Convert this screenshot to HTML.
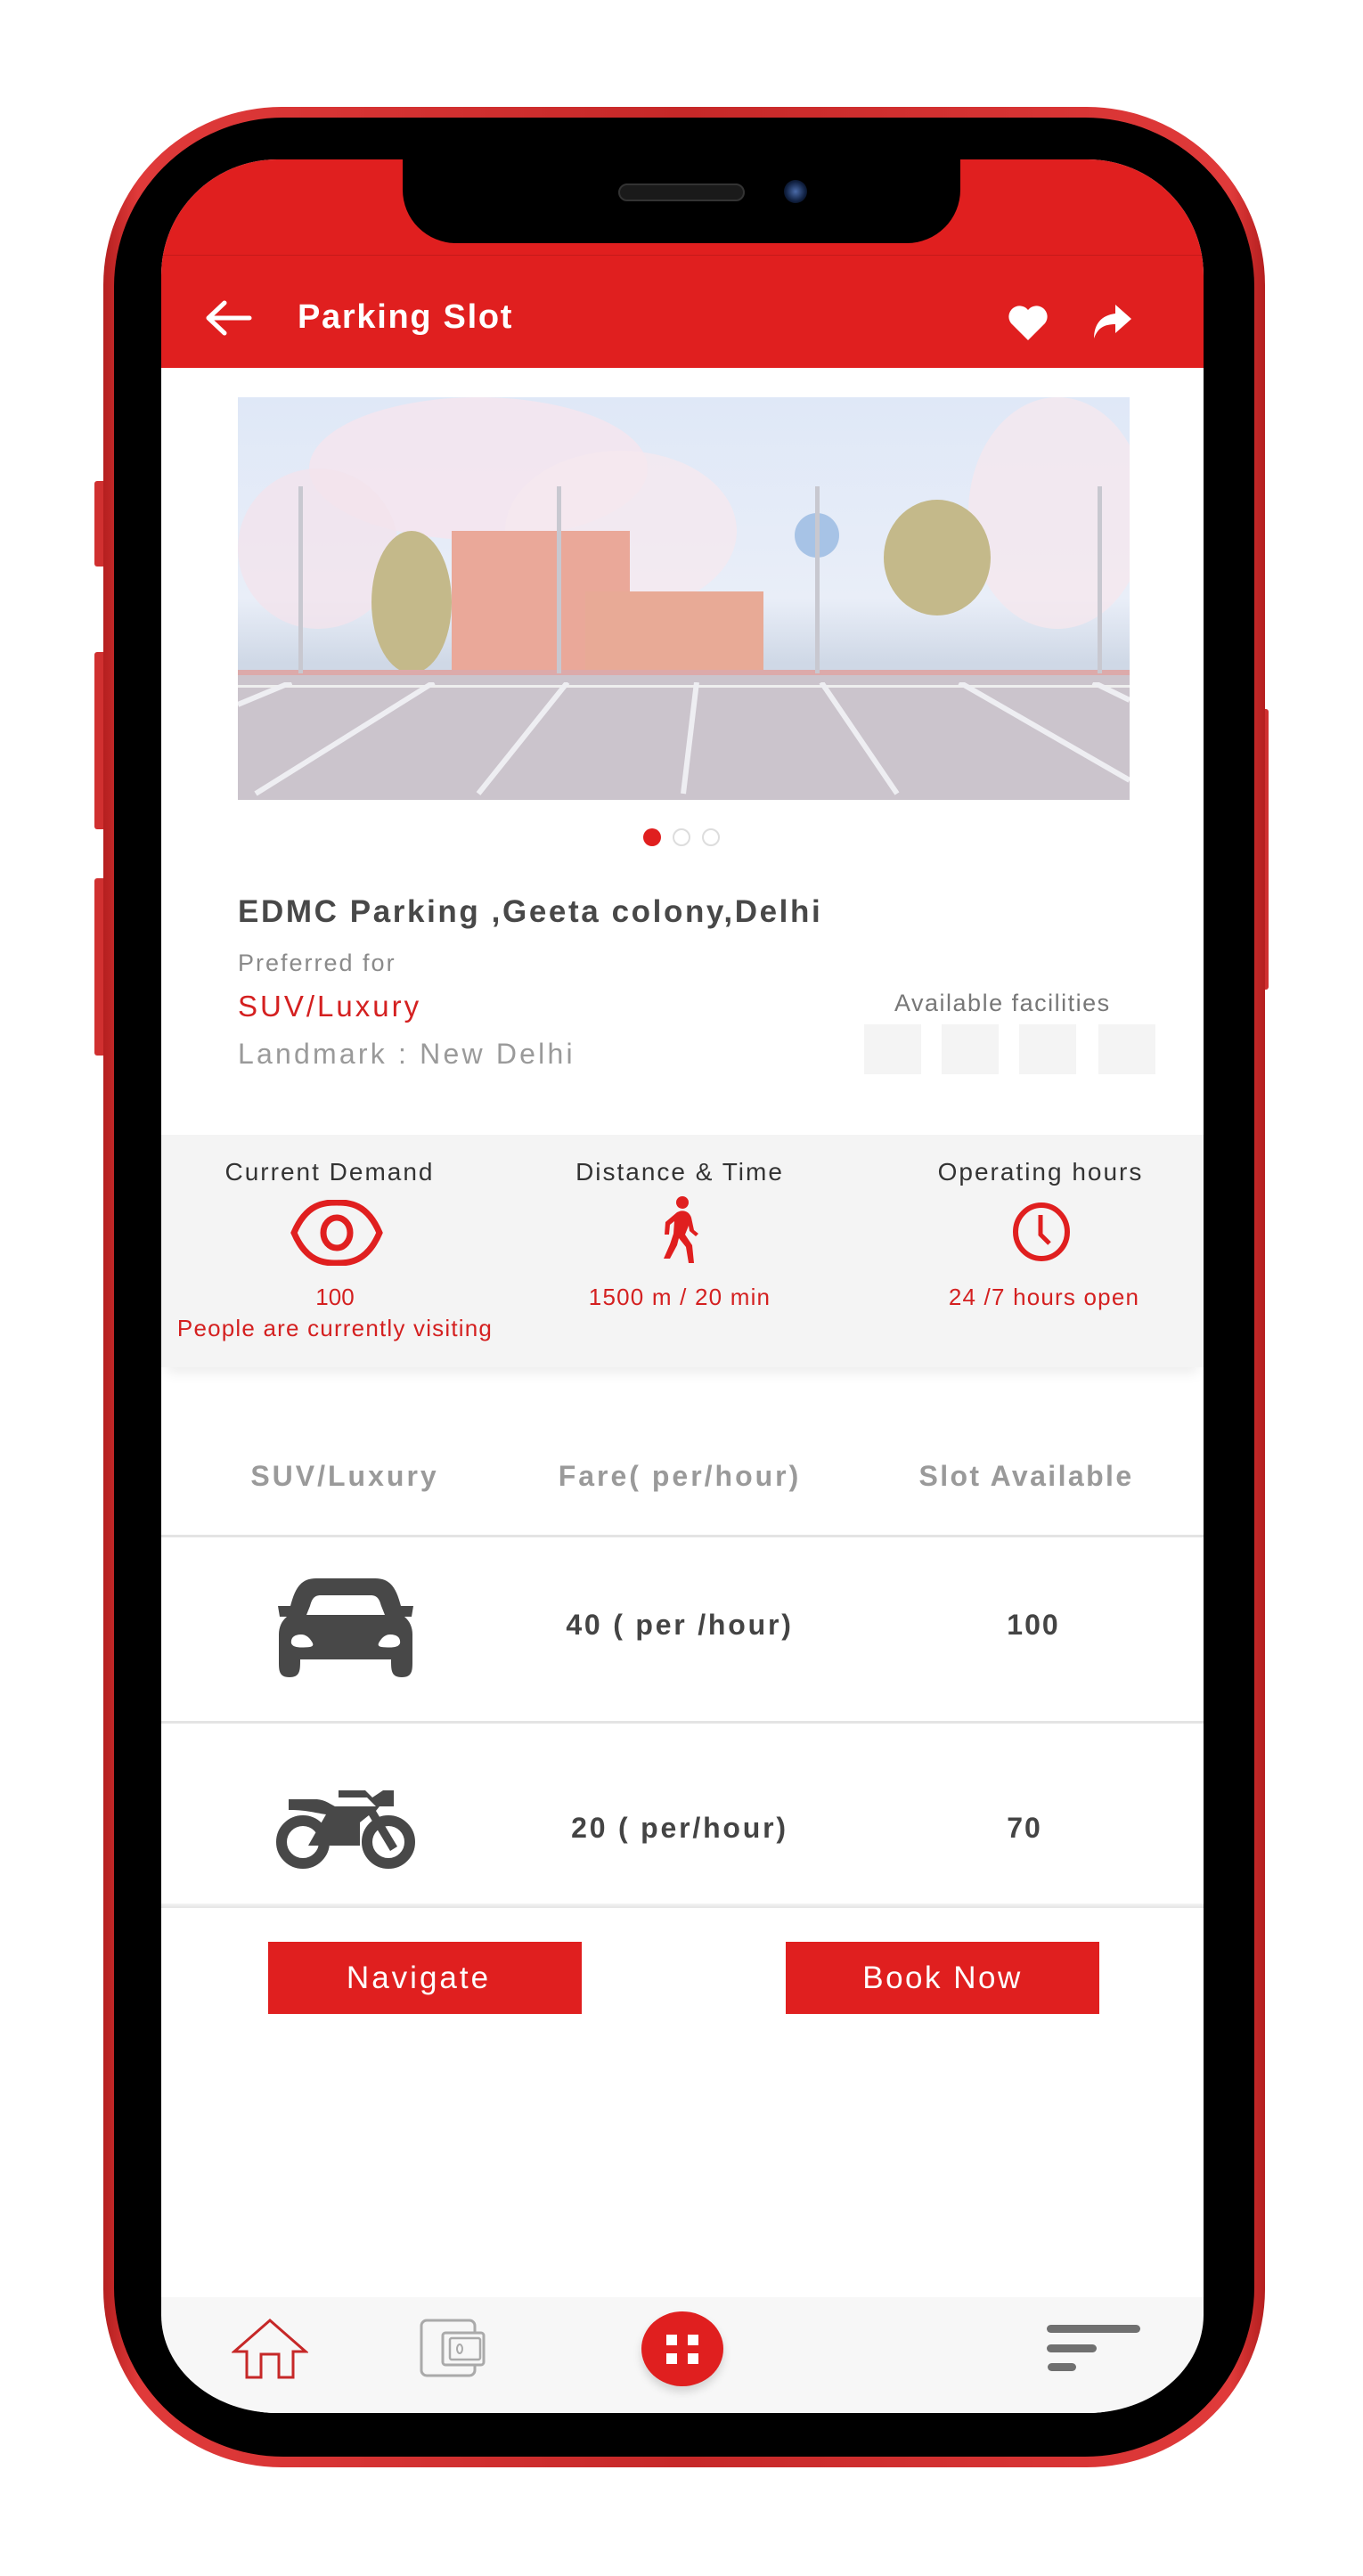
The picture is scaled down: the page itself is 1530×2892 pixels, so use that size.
<!DOCTYPE html>
<html><head><meta charset="utf-8"><style>
*{margin:0;padding:0;box-sizing:border-box}
body{width:1530px;height:2892px;background:#fff;position:relative;overflow:hidden;font-family:"Liberation Sans",sans-serif}
.a{position:absolute}
.t{position:absolute;white-space:nowrap}
</style></head><body>
<div class="a" style="left:106px;top:540px;width:14px;height:96px;background:#d03030;border-radius:3px"></div>
<div class="a" style="left:106px;top:732px;width:14px;height:199px;background:#d03030;border-radius:3px"></div>
<div class="a" style="left:106px;top:986px;width:14px;height:199px;background:#d03030;border-radius:3px"></div>
<div class="a" style="left:1412px;top:796px;width:12px;height:315px;background:#d03030;border-radius:3px"></div>
<div class="a" style="left:116px;top:120px;width:1304px;height:2650px;border-radius:200px;background:linear-gradient(90deg,#b51f1f,#e03a3a 3%,#c62828 50%,#e03a3a 97%,#b51f1f)"></div>
<div class="a" style="left:128px;top:132px;width:1280px;height:2626px;border-radius:190px;background:#000"></div>
<div class="a" style="left:181px;top:179px;width:1170px;height:2530px;border-radius:130px;background:#fff;overflow:hidden">
  <div class="a" style="left:0;top:0;width:1170px;height:234px;background:#e01f1f"></div>
  <div class="a" style="left:0;top:107px;width:1170px;height:1px;background:#c41a1a"></div>
  <div class="a" style="left:0;top:234px;width:1170px;height:2296px;background:#fff;border-radius:18px 18px 0 0"></div>
</div>
<div class="a" style="left:452px;top:170px;width:626px;height:103px;background:#000;border-radius:0 0 60px 60px"></div>
<div class="a" style="left:694px;top:206px;width:142px;height:20px;border-radius:10px;background:#1a1a1a;border:2px solid #333"></div>
<div class="a" style="left:880px;top:202px;width:26px;height:26px;border-radius:50%;background:radial-gradient(#4a6aa8,#102040 60%,#000)"></div>
<svg class="a" style="left:228px;top:337px" width="56" height="40" viewBox="0 0 56 40"><path d="M52 20H6M24 3L6 20l18 17" stroke="#fff" stroke-width="5" fill="none" stroke-linecap="round" stroke-linejoin="round"/></svg>
<div class="t" style="left:334px;top:335px;font-size:38px;color:#fff;font-weight:bold;letter-spacing:1.7px">Parking Slot</div>
<svg class="a" style="left:1130px;top:340px" width="48" height="44" viewBox="0 0 24 22"><path d="M12 21L2.5 11.5A5.5 5.5 0 0 1 12 4a5.5 5.5 0 0 1 9.5 7.5z" fill="#fff"/></svg>
<svg class="a" style="left:1222px;top:338px" width="50" height="48" viewBox="0 0 25 24"><path d="M15 2l9 8-9 8v-5c-6 0-10 2-12 8 0-8 4-13 12-14z" fill="#fff"/></svg>
<div class="a" style="left:267px;top:446px;width:1001px;height:452px;overflow:hidden;background:linear-gradient(#dfe8f7,#e9eef8 50%,#cfd8e6 66%)">
  <div class="a" style="left:80px;top:0;width:380px;height:160px;border-radius:50%;background:#f4e6ee;opacity:.9"></div>
  <div class="a" style="left:0px;top:80px;width:180px;height:180px;border-radius:50%;background:#f3e4ec;opacity:.8"></div>
  <div class="a" style="left:300px;top:60px;width:260px;height:180px;border-radius:50%;background:#f5e8ef;opacity:.8"></div>
  <div class="a" style="left:820px;top:0px;width:200px;height:260px;border-radius:50%;background:#f5e7ee;opacity:.8"></div>
  <div class="a" style="left:240px;top:150px;width:200px;height:170px;background:#eaa899"></div>
  <div class="a" style="left:390px;top:218px;width:200px;height:104px;background:#e8aa96"></div>
  <div class="a" style="left:150px;top:150px;width:90px;height:160px;border-radius:50%;background:#c4b98a"></div>
  <div class="a" style="left:725px;top:115px;width:120px;height:130px;border-radius:50%;background:#c4b98a"></div>
  <div class="a" style="left:625px;top:130px;width:50px;height:50px;border-radius:50%;background:#a7c3e6"></div>
  <div class="a" style="left:0;top:312px;width:1001px;height:140px;background:#cbc4cc"></div>
  <div class="a" style="left:0;top:306px;width:1001px;height:6px;background:#dcaaaa"></div>
  <div class="a" style="left:0;top:323px;width:1001px;height:3px;background:#eee"></div>
  <div class="a" style="left:68px;top:100px;width:5px;height:210px;background:#c8c8d0"></div>
  <div class="a" style="left:358px;top:100px;width:5px;height:210px;background:#c8c8d0"></div>
  <div class="a" style="left:648px;top:100px;width:5px;height:210px;background:#c8c8d0"></div>
  <div class="a" style="left:965px;top:100px;width:5px;height:210px;background:#c8c8d0"></div>
  <svg class="a" style="left:0;top:320px" width="1001" height="132"><g stroke="#eeeef2" stroke-width="6"><line x1="220" y1="0" x2="20" y2="125"/><line x1="370" y1="0" x2="270" y2="125"/><line x1="515" y1="0" x2="500" y2="125"/><line x1="655" y1="0" x2="740" y2="125"/><line x1="810" y1="0" x2="1001" y2="110"/><line x1="60" y1="0" x2="0" y2="25"/><line x1="960" y1="0" x2="1001" y2="20"/></g></svg>
</div>
<div class="a" style="left:722px;top:930px;width:20px;height:20px;border-radius:50%;background:#e01f1f"></div>
<div class="a" style="left:755px;top:930px;width:20px;height:20px;border-radius:50%;border:2px solid #ddd"></div>
<div class="a" style="left:788px;top:930px;width:20px;height:20px;border-radius:50%;border:2px solid #ddd"></div>
<div class="t" style="left:267px;top:1004px;font-size:35px;font-weight:bold;color:#484848;letter-spacing:2.6px">EDMC Parking ,Geeta colony,Delhi</div>
<div class="t" style="left:267px;top:1066px;font-size:27px;color:#8a8a8a;letter-spacing:2px">Preferred for</div>
<div class="t" style="left:267px;top:1111px;font-size:33px;color:#d42020;letter-spacing:3px">SUV/Luxury</div>
<div class="t" style="left:267px;top:1165px;font-size:32px;color:#9a9a9a;letter-spacing:3.2px">Landmark : New Delhi</div>
<div class="t" style="left:1004px;top:1111px;font-size:27px;color:#777;letter-spacing:1.5px">Available facilities</div>
<div class="a" style="left:970px;top:1150px;width:64px;height:56px;background:#f4f4f4"></div>
<div class="a" style="left:1057px;top:1150px;width:64px;height:56px;background:#f4f4f4"></div>
<div class="a" style="left:1144px;top:1150px;width:64px;height:56px;background:#f4f4f4"></div>
<div class="a" style="left:1233px;top:1150px;width:64px;height:56px;background:#f4f4f4"></div>
<div class="a" style="left:181px;top:1274px;width:1170px;height:261px;background:#f4f4f4;box-shadow:0 12px 14px -6px rgba(0,0,0,.08)"></div>
<div class="t" style="left:170px;top:1300px;width:400px;text-align:center;font-size:28px;color:#333;letter-spacing:2px">Current Demand</div>
<div class="t" style="left:563px;top:1300px;width:400px;text-align:center;font-size:28px;color:#333;letter-spacing:2px">Distance &amp; Time</div>
<div class="t" style="left:968px;top:1300px;width:400px;text-align:center;font-size:28px;color:#333;letter-spacing:2px">Operating hours</div>
<svg class="a" style="left:326px;top:1347px" width="104" height="74" viewBox="0 0 104 74"><path d="M4 37C18 4 38 3 52 3s34 1 48 34C86 70 66 71 52 71S18 70 4 37z" stroke="#e01f1f" stroke-width="7" fill="none"/><ellipse cx="52" cy="37" rx="15" ry="17" stroke="#e01f1f" stroke-width="7" fill="none"/></svg>
<svg class="a" style="left:738px;top:1342px" width="54" height="76" viewBox="0 0 54 76"><circle cx="28" cy="8" r="7" fill="#e01f1f"/><path d="M22 19c8-4 14 0 16 6l3 14 5 4-3 3-7-6-1-6-4 10 8 12 2 20h-6l-3-18-8-10-2 8-8 15H7l7-16 4-12 1-14-5 4-1 11H8l1-14z" fill="#e01f1f"/></svg>
<svg class="a" style="left:1136px;top:1350px" width="66" height="66" viewBox="0 0 66 66"><ellipse cx="33" cy="33" rx="29" ry="30" stroke="#e01f1f" stroke-width="6" fill="none"/><path d="M32 14v22l10 10" stroke="#e01f1f" stroke-width="5" fill="none"/></svg>
<div class="t" style="left:176px;top:1441px;width:400px;text-align:center;font-size:26px;color:#d42020">100</div>
<div class="t" style="left:176px;top:1476px;width:400px;text-align:center;font-size:26px;color:#d42020;letter-spacing:1.2px">People are currently visiting</div>
<div class="t" style="left:563px;top:1441px;width:400px;text-align:center;font-size:26px;color:#d42020;letter-spacing:1.2px">1500 m / 20 min</div>
<div class="t" style="left:972px;top:1441px;width:400px;text-align:center;font-size:26px;color:#d42020;letter-spacing:1.2px">24 /7 hours open</div>
<div class="t" style="left:187px;top:1639px;width:400px;text-align:center;font-size:32px;font-weight:bold;color:#9a9a9a;letter-spacing:3px">SUV/Luxury</div>
<div class="t" style="left:563px;top:1639px;width:400px;text-align:center;font-size:32px;font-weight:bold;color:#9a9a9a;letter-spacing:3px">Fare( per/hour)</div>
<div class="t" style="left:952px;top:1639px;width:400px;text-align:center;font-size:32px;font-weight:bold;color:#9a9a9a;letter-spacing:2.4px">Slot Available</div>
<div class="a" style="left:181px;top:1723px;width:1170px;height:3px;background:#e4e4e4"></div>
<svg class="a" style="left:310px;top:1772px" width="156" height="112" viewBox="0 0 156 112"><path d="M45 0h66c18 0 24 12 29 31h14l-2 12h-8c6 5 9 12 9 20v30c0 10 0 18-12 18s-12-8-12-20H27c0 12 0 20-12 20S3 103 3 93V63c0-8 3-15 9-20H4L2 31h14C21 12 27 0 45 0zm5 19c-8 0-10 5-12 12l-4 10h88l-4-10c-2-7-4-12-12-12zM28 63c-8 0-12 4-11 10 2 5 10 5 21 4 4-1 4-3 2-6-3-5-7-8-12-8zm100 0c-5 0-9 3-12 8-2 3-2 5 2 6 11 1 19 1 21-4 1-6-3-10-11-10z" fill="#484848" fill-rule="evenodd"/></svg>
<div class="t" style="left:563px;top:1806px;width:400px;text-align:center;font-size:32px;font-weight:bold;color:#444;letter-spacing:2.8px">40 ( per /hour)</div>
<div class="t" style="left:960px;top:1806px;width:400px;text-align:center;font-size:32px;font-weight:bold;color:#444;letter-spacing:2px">100</div>
<div class="a" style="left:181px;top:1932px;width:1170px;height:3px;background:#e4e4e4"></div>
<svg class="a" style="left:310px;top:2008px" width="156" height="92" viewBox="0 0 156 92"><circle cx="30" cy="60" r="24" stroke="#484848" stroke-width="12" fill="none"/><circle cx="126" cy="60" r="24" stroke="#484848" stroke-width="12" fill="none"/><path d="M14 12h30c10 0 16 5 22 8h46l-10-10H70V2h30l8 8 12-8h12v18h-16l-4 5 24 40-8 5-24-40-10 8v26H36l20-35c-14-2-22-5-42-5z" fill="#484848"/></svg>
<div class="t" style="left:563px;top:2034px;width:400px;text-align:center;font-size:32px;font-weight:bold;color:#444;letter-spacing:2.8px">20 ( per/hour)</div>
<div class="t" style="left:950px;top:2034px;width:400px;text-align:center;font-size:32px;font-weight:bold;color:#444;letter-spacing:2px">70</div>
<div class="a" style="left:181px;top:2137px;width:1170px;height:5px;background:linear-gradient(#f4f4f4,#e4e4e4)"></div>
<div class="t" style="left:301px;top:2180px;width:352px;height:81px;background:#e01f1f;color:#fff;font-size:35px;text-align:center;line-height:81px;letter-spacing:3px;padding-right:14px">Navigate</div>
<div class="t" style="left:882px;top:2180px;width:352px;height:81px;background:#e01f1f;color:#fff;font-size:35px;text-align:center;line-height:81px;letter-spacing:2.5px">Book Now</div>
<div class="a" style="left:181px;top:2579px;width:1170px;height:130px;background:#f7f7f7;border-radius:0 0 130px 130px / 0 0 110px 110px"></div>
<svg class="a" style="left:260px;top:2603px" width="86" height="68" viewBox="0 0 86 68"><path d="M43 2L3 37h14v29h16V40h20v26h16V37h14z" stroke="#c62828" stroke-width="3" fill="none"/></svg>
<svg class="a" style="left:471px;top:2603px" width="74" height="66" viewBox="0 0 74 66"><rect x="2" y="2" width="60" height="62" rx="6" stroke="#aaa" stroke-width="3" fill="none"/><rect x="26" y="16" width="46" height="36" rx="3" stroke="#aaa" stroke-width="3" fill="#f7f7f7"/><rect x="34" y="22" width="34" height="24" rx="2" stroke="#aaa" stroke-width="2.5" fill="none"/><ellipse cx="45" cy="34" rx="3" ry="5" stroke="#aaa" stroke-width="2" fill="none"/></svg>
<div class="a" style="left:720px;top:2595px;width:92px;height:84px;border-radius:50%;background:#e01f1f;box-shadow:0 6px 10px rgba(0,0,0,.15)"></div>
<div class="a" style="left:748px;top:2621px;width:12px;height:12px;background:#fff"></div>
<div class="a" style="left:772px;top:2621px;width:12px;height:12px;background:#fff"></div>
<div class="a" style="left:748px;top:2642px;width:12px;height:12px;background:#fff"></div>
<div class="a" style="left:772px;top:2642px;width:12px;height:12px;background:#fff"></div>
<div class="a" style="left:1175px;top:2610px;width:105px;height:9px;border-radius:5px;background:#707070"></div>
<div class="a" style="left:1175px;top:2632px;width:56px;height:9px;border-radius:5px;background:#707070"></div>
<div class="a" style="left:1176px;top:2653px;width:32px;height:9px;border-radius:5px;background:#707070"></div>
</body></html>
